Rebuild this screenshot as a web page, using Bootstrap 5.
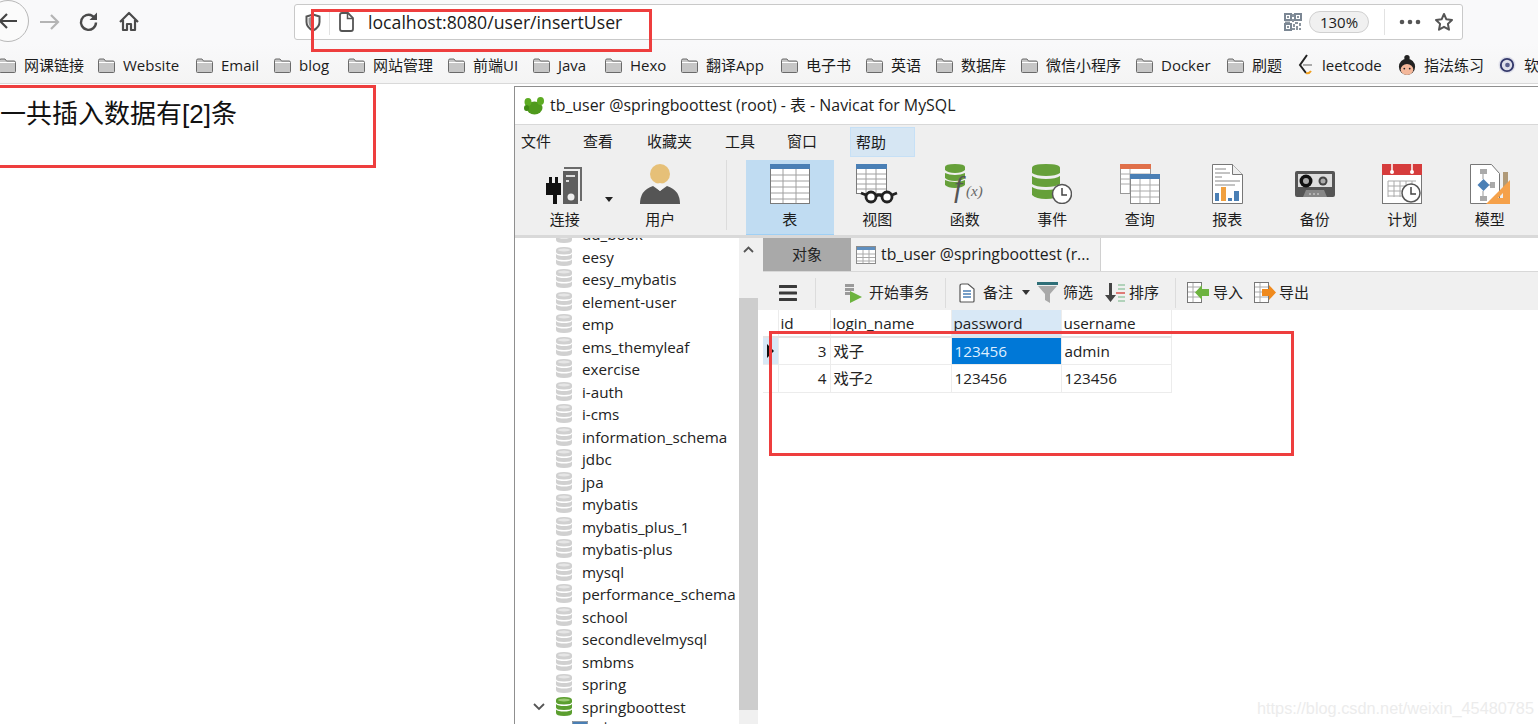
<!doctype html>
<html lang="en">
<head>
<meta charset="UTF-8" />
<title>insertUser</title>
<link href="https://cdn.jsdelivr.net/npm/bootstrap@5.3.0/dist/css/bootstrap.min.css" rel="stylesheet" />
<style>
html, body { height: 100%; overflow: hidden; background: #fff; }
body { font-family: "Open Sans", "Noto Sans CJK SC", sans-serif; color: #1c1c1c; position: relative; }
.ff-top { height: 44px; background: #f9f9fa; }
.ff-back { width: 42px; height: 42px; margin-left: -13px; border: 1px solid #b8b8b8; flex: none; background: #fbfbfb; }
.ff-btn { width: 40px; flex: none; }
.url-bar { width: 1169px; height: 36px; margin-left: 145px; margin-top: 4px; background: #fff; border: 1px solid #c9c9c9; border-radius: 3px; flex: none; }
.url-shield { margin-left: 10px; }
.url-text { font-size: 17.7px; color: #1b1b1b; margin-left: 14px; }
.zoom-pill { width: 60px; height: 22px; margin-left: 7px; border: 1px solid #d0d0d0; border-radius: 11px; background: #f0f0f0; font-size: 15px; line-height: 20px; text-align: center; }
.url-sep { width: 1px; height: 26px; background: #e2e2e2; }
.url-sep-end { margin-left: 15px; }
.url-dots { margin-left: 14px; }
.url-star { margin-left: 13px; margin-right: 8px; }
.bm-bar { height: 40px; padding-top: 3px; background: linear-gradient(#f9f9fa, #f4f4f4); border-bottom: 1px solid #d9d9d9; margin-left: -1px; white-space: nowrap; font-size: 15px; display: grid; align-items: center; grid-template-columns: 99px 98px 78px 74px 100px 85px 72px 76px 100px 85px 70px 85px 115px 91px 70px 101px 100px 60px; }
.bm-item { gap: 8px; }
.page-msg { font-family: "Liberation Sans", "Noto Sans CJK SC", sans-serif; font-size: 26px; line-height: 30px; color: #111; padding-top: 15px; }
.nv-win { position: absolute; left: 514px; top: 86px; width: 1030px; height: 640px; background: #fff; border: 1px solid #8f8f8f; border-right: 0; }
.nv-title { height: 38px; font-size: 15.9px; padding-left: 9px; gap: 5px; border-bottom: 1px solid #d8d8d8; }
.nv-menu { height: 35px; background: #efefef; font-size: 15px; padding-left: 6px; padding-bottom: 2px; }
.nv-menu span { flex: none; }
.nv-help { background: #d6e6f3; border: 1px solid #c6e0f6; height: 30px; line-height: 28px; padding-left: 5px; width: 65px; }
.mn-1 { width: 62px; } .mn-2 { width: 64px; } .mn-3 { width: 78px; } .mn-4 { width: 62px; } .mn-5 { width: 63px; }
.nv-tools { height: 78px; background: #efefef; border-bottom: 3px solid #d9d9d9; font-size: 15px; }
.nv-tool { width: 87.5px; height: 75px; flex: none; padding-top: 4px; text-align: center; line-height: 20px; }
.nv-tool svg { display: block; margin: 0 auto 5px; }
.nv-tool.active { background: #c0dcf2; border-bottom: 1px solid #9fd0f5; }
.tool-conn { margin-left: 6px; }
.tool-user { margin-left: 8px; }
.conn-caret { left: 84px; top: 37px; }
.nv-tool svg.conn-caret { margin: 0; }
.nv-vsep { width: 1px; height: 70px; background: #dcdcdc; margin: 0 19px 0 22px; flex: none; }
.nv-main { height: 486px; }
.nv-tree { width: 224px; flex: none; overflow: hidden; font-size: 15.2px; }
.nv-tree-list { margin-top: -15px; padding-left: 41px; }
.tree-row { height: 22.5px; line-height: 22.5px; gap: 10px; color: #222; position: relative; }
.tree-arrow { position: absolute; left: -23px; top: 7px; }
.nv-scroll { width: 19px; flex: none; background: #f0f0f0; position: relative; }
.scroll-up { left: 4px; top: 8px; }
.nv-thumb { position: absolute; top: 60px; left: 0; right: 0; height: 412px; background: #cdcdcd; }
.nv-right { width: 780px; flex: none; }
.tab-strip { height: 34px; padding-left: 5px; background: #fff; border-bottom: 1px solid #d8d8d8; font-size: 15.8px; }
.tab-obj { width: 88px; height: 33px; background: #a9a9a9; text-align: center; line-height: 32px; color: #222; flex: none; font-size: 15px; }
.tab-cur { width: 250px; height: 33px; background: #f1f1f1; gap: 5px; padding-left: 5px; flex: none; border-right: 1px solid #d0d0d0; white-space: nowrap; }
.tab-fill { background: #f0f0f0; width: 5px; height: 34px; margin-left: -5px; }
.sub-tools { height: 38px; background: #f0f0f0; font-size: 15px; padding-left: 21px; padding-top: 3px; }
.sub-sep { width: 1px; height: 30px; background: #dcdcdc; flex: none; }
.sub-item { flex: none; color: #222; }
.sep-1 { margin-left: 18px; }
.si-begin { margin-left: 27px; gap: 6px; }
.sep-2 { margin-left: 16px; }
.si-note { margin-left: 13px; gap: 8px; }
.note-caret { margin-left: 9px; }
.si-filter { margin-left: 7px; gap: 5px; }
.si-sort { margin-left: 11px; gap: 4px; }
.sep-3 { margin-left: 16px; }
.si-imp { margin-left: 11px; gap: 4px; }
.si-exp { margin-left: 11px; gap: 3px; }
.grid-tb { border-collapse: collapse; table-layout: fixed; font-size: 15.3px; width: 408px; margin-left: 5px; }
.grid-tb th, .grid-tb td { font-weight: 400; border: 1px solid #ececec; padding: 0 3px; white-space: nowrap; overflow: hidden; color: #222; }
.grid-tb th { height: 27px; text-align: left; background: #fff; border-top: 0; padding: 0 3px 0 2px; border-bottom: 2px solid #e4e4e4; }
.grid-tb td { height: 27.5px; }
.grid-tb .sel-col { background: #d8e8f6; }
.grid-tb .sel-cell { background: #0078d7; color: #dfefff; }
.grid-tb .ind-cell { padding: 0; border-left: 0; }
.grid-tb .ind-on { background: #d8e8f6; }
.grid-tb .num-cell { text-align: right; padding-right: 3px; }
.col-ind { width: 15px; } .col-id { width: 52px; } .col-login { width: 121px; } .col-wide { width: 110px; }
.red-box { position: absolute; border: 3px solid #ee3e3e; pointer-events: none; }
.rb-url { left: 311px; top: 9px; width: 341px; height: 43px; }
.rb-msg { left: -3px; top: 85px; width: 379px; height: 83px; }
.rb-grid { left: 769px; top: 331px; width: 525px; height: 125px; }
.wm { position: absolute; left: 1257px; top: 696px; font-family: "Liberation Sans", sans-serif; font-size: 16.3px; color: #ececec; white-space: nowrap; }
</style>
</head>
<body>
<svg width="0" height="0" class="position-absolute">
  <symbol id="i-folder" viewBox="0 0 17 15">
    <path d="M.5 2.500q0-1.500 1.500-1.500h4l1.500 2h7.500q1.500 0 1.500 1.500v9q0 1-1 1H1.500q-1 0-1-1z" fill="#c6c6c6" stroke="#6a6a6a"/>
    <path d="M1 4.500h15" stroke="#fff"/>
  </symbol>
  <symbol id="i-db" viewBox="0 0 16 20">
    <g fill="#d0d0d0">
      <path d="M0 3q0-3 8-3t8 3v2q0 2.500-8 2.500T0 5z"/>
      <path d="M0 7q2 2 8 2t8-2v3.500q0 2.500-8 2.500T0 10.500z"/>
      <path d="M0 12.500q2 2 8 2t8-2V16q0 3-8 3t-8-3z"/>
    </g>
    <ellipse cx="8" cy="3" rx="6" ry="1.500" fill="#e6e6e6"/>
  </symbol>
  <symbol id="i-db-g" viewBox="0 0 16 20">
    <g fill="#5b9e2f">
      <path d="M0 3q0-3 8-3t8 3v2q0 2.500-8 2.500T0 5z"/>
      <path d="M0 7q2 2 8 2t8-2v3.500q0 2.500-8 2.500T0 10.500z"/>
      <path d="M0 12.500q2 2 8 2t8-2V16q0 3-8 3t-8-3z"/>
    </g>
    <ellipse cx="8" cy="3" rx="6" ry="1.500" fill="#9ccb75"/>
  </symbol>
  <symbol id="i-grid" viewBox="0 0 20 20">
    <rect x=".5" y=".5" width="19" height="19" fill="#fff" stroke="#8c8c8c"/>
    <rect x="1" y="1" width="18" height="4" fill="#4a7fb5"/>
    <path d="M1 9h18M1 13h18M1 16.500h18M7 5v14M13 5v14" stroke="#a5a5a5" fill="none"/>
  </symbol>
</svg>

<!-- browser toolbar -->
<div class="ff-top d-flex align-items-start">
  <div class="ff-back rounded-circle d-flex align-items-center justify-content-center">
    <svg width="24" height="24" viewBox="0 0 24 24"><path d="M21 12H4M11 5l-7 7 7 7" fill="none" stroke="#444" stroke-width="2.200"/></svg>
  </div>
  <div class="d-flex align-items-center mt-2">
    <div class="ff-btn text-center"><svg width="24" height="24" viewBox="0 0 24 24"><path d="M3 12h18M14 5l7 7-7 7" fill="none" stroke="#b4b4b4" stroke-width="2.200"/></svg></div>
    <div class="ff-btn text-center"><svg width="22" height="24" viewBox="0 0 22 24"><path d="M18 12.500A7.500 7.500 0 1 1 14.500 6l3 2" fill="none" stroke="#4a4a4a" stroke-width="2.400"/><path d="M19 2.500V10h-7.500z" fill="#4a4a4a"/></svg></div>
    <div class="ff-btn text-center"><svg width="22" height="24" viewBox="0 0 22 24"><path d="M2 12 11 3l9 9M5 10v10h4v-6h4v6h4V10" fill="none" stroke="#4a4a4a" stroke-width="2.200" stroke-linejoin="round"/></svg></div>
  </div>
  <div class="url-bar d-flex align-items-center">
    <svg width="16" height="19" viewBox="0 0 16 19" class="url-shield"><path d="M8 1.500 14.500 3.500V9q0 5.500-6.500 8.500Q1.500 14.500 1.500 9V3.500z" fill="none" stroke="#555" stroke-width="2"/><path d="M8 3v13q-4.500-2.500-4.500-7V5z" fill="#999"/></svg>
    <div class="url-sep ms-2"></div>
    <svg width="16" height="20" viewBox="0 0 16 20" class="ms-2"><path d="M2 3q0-2 2-2h6l5 5v11q0 2-2 2H4q-2 0-2-2z" fill="#fff" stroke="#555" stroke-width="1.800"/><path d="M9.500 1v5.500H15" fill="none" stroke="#555" stroke-width="1.500"/></svg>
    <span class="url-text">localhost:8080/user/insertUser</span>
    <div class="flex-grow-1"></div>
    <svg width="18" height="18" viewBox="0 0 18 18"><path d="M1 1h6v6H1zM11 1h6v6h-6zM1 11h6v6H1z" fill="none" stroke="#7b8794" stroke-width="2"/><path d="M3 3h2v2H3zM13 3h2v2h-2zM3 13h2v2H3zM8 1h2v3H8zM8 6h2v3H8zM11 9h3v2h-3zM15 10h2v3h-2zM9 11h2v3H9zM12 13h2v4h-2zM8 15h3v2H8zM15 15h2v2h-2zM1 8.500h5v1.500H1z" fill="#8a949e"/></svg>
    <div class="zoom-pill">130%</div>
    <div class="url-sep url-sep-end"></div>
    <svg width="22" height="6" viewBox="0 0 22 6" class="url-dots"><circle cx="3" cy="3" r="2.300" fill="#555"/><circle cx="11" cy="3" r="2.300" fill="#555"/><circle cx="19" cy="3" r="2.300" fill="#555"/></svg>
    <svg width="20" height="20" viewBox="0 0 20 20" class="url-star"><path d="M10 2l2.400 5.300 5.600.7-4.100 3.900 1.100 5.800-5-2.900-5 2.900 1.100-5.800L2 8l5.600-.7z" fill="none" stroke="#555" stroke-width="2" stroke-linejoin="round"/></svg>
  </div>
</div>

<!-- bookmarks -->
<div class="bm-bar">
  <div class="bm-item d-flex align-items-center"><svg width="17" height="15"><use href="#i-folder"/></svg><span>网课链接</span></div>
  <div class="bm-item d-flex align-items-center"><svg width="17" height="15"><use href="#i-folder"/></svg><span>Website</span></div>
  <div class="bm-item d-flex align-items-center"><svg width="17" height="15"><use href="#i-folder"/></svg><span>Email</span></div>
  <div class="bm-item d-flex align-items-center"><svg width="17" height="15"><use href="#i-folder"/></svg><span>blog</span></div>
  <div class="bm-item d-flex align-items-center"><svg width="17" height="15"><use href="#i-folder"/></svg><span>网站管理</span></div>
  <div class="bm-item d-flex align-items-center"><svg width="17" height="15"><use href="#i-folder"/></svg><span>前端UI</span></div>
  <div class="bm-item d-flex align-items-center"><svg width="17" height="15"><use href="#i-folder"/></svg><span>Java</span></div>
  <div class="bm-item d-flex align-items-center"><svg width="17" height="15"><use href="#i-folder"/></svg><span>Hexo</span></div>
  <div class="bm-item d-flex align-items-center"><svg width="17" height="15"><use href="#i-folder"/></svg><span>翻译App</span></div>
  <div class="bm-item d-flex align-items-center"><svg width="17" height="15"><use href="#i-folder"/></svg><span>电子书</span></div>
  <div class="bm-item d-flex align-items-center"><svg width="17" height="15"><use href="#i-folder"/></svg><span>英语</span></div>
  <div class="bm-item d-flex align-items-center"><svg width="17" height="15"><use href="#i-folder"/></svg><span>数据库</span></div>
  <div class="bm-item d-flex align-items-center"><svg width="17" height="15"><use href="#i-folder"/></svg><span>微信小程序</span></div>
  <div class="bm-item d-flex align-items-center"><svg width="17" height="15"><use href="#i-folder"/></svg><span>Docker</span></div>
  <div class="bm-item d-flex align-items-center"><svg width="17" height="15"><use href="#i-folder"/></svg><span>刷题</span></div>
  <div class="bm-item d-flex align-items-center"><svg width="17" height="22" viewBox="0 0 17 22"><path d="M10 1 3 11l6 8" fill="none" stroke="#222" stroke-width="2"/><path d="M9 19q3 1 5-2" fill="none" stroke="#f0a020" stroke-width="2"/><path d="M6 11h9" fill="none" stroke="#aaa" stroke-width="2"/></svg><span>leetcode</span></div>
  <div class="bm-item d-flex align-items-center"><svg width="18" height="22" viewBox="0 0 20 24"><circle cx="10" cy="4" r="3" fill="#222"/><circle cx="10" cy="14" r="9" fill="#222"/><ellipse cx="10" cy="17" rx="7" ry="6" fill="#f3b79a"/><circle cx="7" cy="16" r="1" fill="#222"/><circle cx="13" cy="16" r="1" fill="#222"/></svg><span>指法练习</span></div>
  <div class="bm-item d-flex align-items-center"><svg width="18" height="20" viewBox="0 0 19 20"><circle cx="9.500" cy="10" r="9" fill="#dfe0ea"/><circle cx="9.500" cy="10" r="6.500" fill="none" stroke="#33386a" stroke-width="2"/><circle cx="10" cy="10" r="2.500" fill="#5a5f8c"/></svg><span>软</span></div>
</div>

<!-- page body -->
<div class="page-msg">一共插入数据有[2]条</div>

<!-- navicat window -->
<div class="nv-win">
  <div class="nv-title d-flex align-items-center">
    <svg width="21" height="18" viewBox="0 0 21 18"><ellipse cx="10.500" cy="11" rx="8" ry="6.500" fill="#4f9a1c"/><ellipse cx="4" cy="5" rx="3.500" ry="4" fill="#5cab22"/><ellipse cx="16.500" cy="4" rx="3.500" ry="4" fill="#5cab22"/><ellipse cx="2.500" cy="11" rx="2.500" ry="3" fill="#3f8a14"/></svg>
    <span>tb_user @springboottest (root) - 表 - Navicat for MySQL</span>
  </div>
  <div class="nv-menu d-flex align-items-center">
    <span class="mn-1">文件</span><span class="mn-2">查看</span><span class="mn-3">收藏夹</span><span class="mn-4">工具</span><span class="mn-5">窗口</span><span class="nv-help">帮助</span>
  </div>
  <div class="nv-tools d-flex">
    <div class="nv-tool position-relative tool-conn">
      <svg width="40" height="40" viewBox="0 0 40 40"><path d="M19 5V3h18v34h-2V5z" fill="#6a6a6a"/><path d="M18 7h15v33H18z" fill="#5e5e5e"/><path d="M21 11h9v2h-9zM21 16h3v2h-3z" fill="#ddd"/><circle cx="26" cy="33" r="3.500" fill="#eee"/><path d="M4 13h3v6h3v-6h3v6h3v12H12v9H8v-9H1V19h3z" fill="#111"/></svg>
      连接
      <svg class="position-absolute conn-caret" width="8" height="5" viewBox="0 0 8 5"><path d="M0 0h8L4 5z" fill="#222"/></svg>
    </div>
    <div class="nv-tool tool-user">
      <svg width="40" height="40" viewBox="0 0 40 40"><circle cx="20" cy="10" r="10" fill="#e6c078"/><path d="M0 40q0-14 13-18l7 5 7-5q13 4 13 18z" fill="#555"/><path d="M14 21l6 6 6-6-6-2z" fill="#f4f4f4"/></svg>
      用户
    </div>
    <div class="nv-vsep"></div>
    <div class="nv-tool active">
      <svg width="40" height="40" viewBox="0 0 40 40"><rect x=".5" y=".5" width="39" height="39" fill="#fff" stroke="#7a7a7a"/><rect x="0" y="0" width="40" height="5" fill="#4a7fb5"/><path d="M1 11h38M1 17h38M1 23h38M1 29h38M1 35h38M13 5v34M26 5v34" stroke="#a0a0a0" fill="none"/></svg>
      表
    </div>
    <div class="nv-tool">
      <svg width="42" height="40" viewBox="0 0 42 40"><rect x=".5" y=".5" width="30" height="29" fill="#fff" stroke="#7a7a7a"/><rect width="31" height="5" fill="#4a7fb5"/><path d="M1 10h29M1 15h29M1 20h29M1 25h29M10 5v24M20 5v24" stroke="#a0a0a0" fill="none"/><g fill="#fff" stroke="#222" stroke-width="2.800"><circle cx="15" cy="33" r="5"/><circle cx="31" cy="33" r="5"/><path d="M20 32q3-2 6 0M10 31l-5-2M36 31l5-2" fill="none"/></g></svg>
      视图
    </div>
    <div class="nv-tool">
      <svg width="40" height="40" viewBox="0 0 40 40"><g fill="#66a03a"><path d="M0 3q0-3 10-3t10 3v3q-3 3-10 3T0 6z"/><path d="M0 9q4 2 10 2t10-2v5q-3 3-10 3t-10-3z"/><path d="M0 16q4 2 10 2t10-2v5q-3 3-10 3t-10-3z"/></g><text x="9" y="33" font-family="Liberation Serif,serif" font-style="italic" font-size="30" fill="#555">f</text><text x="21" y="32" font-family="Liberation Serif,serif" font-style="italic" font-size="15" fill="#666">(x)</text></svg>
      函数
    </div>
    <div class="nv-tool">
      <svg width="40" height="40" viewBox="0 0 40 40"><g fill="#66a03a"><path d="M0 4q0-4 14-4t14 4v5q-4 3-14 3T0 9z"/><path d="M0 12q4 3 14 3t14-3v8q-4 3-14 3T0 20z"/><path d="M0 23q4 3 14 3t14-3v8q-4 4-14 4T0 31z"/></g><circle cx="30" cy="30" r="9.500" fill="#fff" stroke="#555" stroke-width="1.500"/><path d="M30 24v7h5" fill="none" stroke="#444" stroke-width="1.500"/></svg>
      事件
    </div>
    <div class="nv-tool">
      <svg width="40" height="40" viewBox="0 0 40 40"><rect x=".5" y=".5" width="30" height="29" fill="#fff" stroke="#999"/><rect width="31" height="5" fill="#e0704a"/><path d="M1 10h29M1 15h29M1 20h29M10 5v24" stroke="#aaa" fill="none"/><rect x="10.500" y="10.500" width="29" height="29" fill="#fff" stroke="#888"/><rect x="10" y="10" width="30" height="5" fill="#4a7fb5"/><path d="M11 21h28M11 27h28M11 33h28M20 15v24M30 15v24" stroke="#aaa" fill="none"/></svg>
      查询
    </div>
    <div class="nv-tool">
      <svg width="31" height="40" viewBox="0 0 31 40"><path d="M.5.500h20l10 10v29H.5z" fill="#fff" stroke="#777"/><path d="M20.500.500v10h10" fill="#eee" stroke="#777"/><path d="M3 5h11M3 9h15M3 13h7M3 17h25M3 21h20" stroke="#888" fill="none"/><path d="M3 29h4v8H3z" fill="#4a7fb5"/><path d="M9 23h5v14H9z" fill="#f0a040"/><path d="M16 34h4v3h-4z" fill="#4a7fb5"/><path d="M22 27h5v10h-5z" fill="#4a7fb5"/></svg>
      报表
    </div>
    <div class="nv-tool">
      <svg width="40" height="40" viewBox="0 0 40 40"><rect y="7" width="40" height="26" rx="2" fill="#555"/><rect x="3" y="10" width="34" height="13" fill="#ddd"/><circle cx="11" cy="17" r="6.500" fill="#111"/><circle cx="11" cy="17" r="3" fill="#aaa"/><circle cx="28" cy="17" r="4.500" fill="#444"/><circle cx="28" cy="17" r="2.500" fill="#aaa"/><path d="M8 33l3-7h18l3 7z" fill="#888"/><path d="M14 30h12" stroke="#ddd" stroke-dasharray="2 2"/></svg>
      备份
    </div>
    <div class="nv-tool">
      <svg width="40" height="40" viewBox="0 0 40 40"><rect x=".5" y=".5" width="39" height="39" fill="#fff" stroke="#777"/><rect width="40" height="11" fill="#d63c3c"/><circle cx="10" cy="8" r="2" fill="#fff"/><circle cx="30" cy="8" r="2" fill="#fff"/><path d="M10 0v7M30 0v7" stroke="#fff" stroke-width="1.500"/><path d="M6 17h28M6 22h28M6 27h28M6 32h20M6 17v16M12 17v16M18 17v16M24 17v16M30 17v12" stroke="#aaa" fill="none"/><circle cx="29" cy="29" r="9" fill="#fff" stroke="#555" stroke-width="1.500"/><path d="M29 23v7h5" fill="none" stroke="#444" stroke-width="1.500"/></svg>
      计划
    </div>
    <div class="nv-tool">
      <svg width="40" height="40" viewBox="0 0 40 40"><path d="M.5.500h21l8 9v30H.5z" fill="#fff" stroke="#777"/><path d="M33 8h5v20h-5z" fill="#b09a78"/><path d="M10 5h7v5h-7zM20 18h5v6h-5zM10 32h7v5h-7z" fill="#aaa"/><path d="M13.500 15l6 6-6 6-6-6z" fill="#4a7fb5"/><path d="M13 10v5M13 27v5M19 21h2" stroke="#999"/><path d="M40 16v24H16zM33 29v5h-5z" fill="#f5a14a" fill-rule="evenodd"/></svg>
      模型
    </div>
  </div>
  <div class="nv-main d-flex">
    <div class="nv-tree">
      <div class="nv-tree-list">
        <div class="tree-row d-flex align-items-center"><svg width="16" height="20"><use href="#i-db"/></svg><span>dd_book</span></div>
        <div class="tree-row d-flex align-items-center"><svg width="16" height="20"><use href="#i-db"/></svg><span>eesy</span></div>
        <div class="tree-row d-flex align-items-center"><svg width="16" height="20"><use href="#i-db"/></svg><span>eesy_mybatis</span></div>
        <div class="tree-row d-flex align-items-center"><svg width="16" height="20"><use href="#i-db"/></svg><span>element-user</span></div>
        <div class="tree-row d-flex align-items-center"><svg width="16" height="20"><use href="#i-db"/></svg><span>emp</span></div>
        <div class="tree-row d-flex align-items-center"><svg width="16" height="20"><use href="#i-db"/></svg><span>ems_themyleaf</span></div>
        <div class="tree-row d-flex align-items-center"><svg width="16" height="20"><use href="#i-db"/></svg><span>exercise</span></div>
        <div class="tree-row d-flex align-items-center"><svg width="16" height="20"><use href="#i-db"/></svg><span>i-auth</span></div>
        <div class="tree-row d-flex align-items-center"><svg width="16" height="20"><use href="#i-db"/></svg><span>i-cms</span></div>
        <div class="tree-row d-flex align-items-center"><svg width="16" height="20"><use href="#i-db"/></svg><span>information_schema</span></div>
        <div class="tree-row d-flex align-items-center"><svg width="16" height="20"><use href="#i-db"/></svg><span>jdbc</span></div>
        <div class="tree-row d-flex align-items-center"><svg width="16" height="20"><use href="#i-db"/></svg><span>jpa</span></div>
        <div class="tree-row d-flex align-items-center"><svg width="16" height="20"><use href="#i-db"/></svg><span>mybatis</span></div>
        <div class="tree-row d-flex align-items-center"><svg width="16" height="20"><use href="#i-db"/></svg><span>mybatis_plus_1</span></div>
        <div class="tree-row d-flex align-items-center"><svg width="16" height="20"><use href="#i-db"/></svg><span>mybatis-plus</span></div>
        <div class="tree-row d-flex align-items-center"><svg width="16" height="20"><use href="#i-db"/></svg><span>mysql</span></div>
        <div class="tree-row d-flex align-items-center"><svg width="16" height="20"><use href="#i-db"/></svg><span>performance_schema</span></div>
        <div class="tree-row d-flex align-items-center"><svg width="16" height="20"><use href="#i-db"/></svg><span>school</span></div>
        <div class="tree-row d-flex align-items-center"><svg width="16" height="20"><use href="#i-db"/></svg><span>secondlevelmysql</span></div>
        <div class="tree-row d-flex align-items-center"><svg width="16" height="20"><use href="#i-db"/></svg><span>smbms</span></div>
        <div class="tree-row d-flex align-items-center"><svg width="16" height="20"><use href="#i-db"/></svg><span>spring</span></div>
        <div class="tree-row d-flex align-items-center"><svg class="tree-arrow" width="12" height="8" viewBox="0 0 12 8"><path d="M1 1l5 5 5-5" fill="none" stroke="#555" stroke-width="1.800"/></svg><svg width="16" height="20"><use href="#i-db-g"/></svg><span>springboottest</span></div>
        <div class="tree-row d-flex align-items-center ps-3"><svg width="16" height="20"><use href="#i-grid"/></svg><span>表</span></div>
      </div>
    </div>
    <div class="nv-scroll">
      <svg class="position-absolute scroll-up" width="11" height="7" viewBox="0 0 11 7"><path d="M1 6l4.500-4.500L10 6" fill="none" stroke="#555" stroke-width="1.800"/></svg>
      <div class="nv-thumb"></div>
    </div>
    <div class="nv-right">
      <div class="tab-strip d-flex">
        <div class="tab-fill"></div>
        <div class="tab-obj">对象</div>
        <div class="tab-cur d-flex align-items-center">
          <svg width="20" height="18" viewBox="0 0 20 18"><rect x=".5" y=".5" width="19" height="17" fill="#fff" stroke="#8c8c8c"/><rect x="1" y="1" width="18" height="3" fill="#5f8fbf"/><path d="M1 8h18M1 11.500h18M1 15h18M7 4v13M13 4v13" stroke="#aaa" fill="none"/></svg>
          <span>tb_user @springboottest (r...</span>
        </div>
      </div>
      <div class="sub-tools d-flex align-items-center">
        <svg width="18" height="16" viewBox="0 0 18 16"><path d="M1 1.500h16M1 8h16M1 14.500h16" stroke="#3a3a3a" stroke-width="3" stroke-linecap="round"/></svg>
        <div class="sub-sep sep-1"></div>
        <div class="sub-item si-begin d-flex align-items-center"><svg width="20" height="20" viewBox="0 0 20 20"><path d="M2 1h9v3H2zM2 5h9v3H2zM2 9h6v3H2z" fill="#9a9a9a"/><path d="M7 8l12 6-12 6z" fill="#6db33f"/></svg><span>开始事务</span></div>
        <div class="sub-sep sep-2"></div>
        <div class="sub-item si-note d-flex align-items-center"><svg width="16" height="20" viewBox="0 0 16 20"><path d="M1 3q0-2 2-2h6l6 5v12q0 1-1 1H2q-1 0-1-1z" fill="#fff" stroke="#555" stroke-width="1.200"/><path d="M4 8h8M4 11h8M4 14h8" stroke="#4a7fb5" stroke-width="1.500"/></svg><span>备注</span></div>
        <svg width="8" height="5" viewBox="0 0 8 5" class="note-caret"><path d="M0 0h8L4 5z" fill="#333"/></svg>
        <div class="sub-item si-filter d-flex align-items-center"><svg width="21" height="21" viewBox="0 0 21 21"><path d="M0 0h21v3H0z" fill="#2f6f78"/><path d="M1 4h19l-7 8v9l-5-3v-6z" fill="#a9a9a9"/></svg><span>筛选</span></div>
        <div class="sub-item si-sort d-flex align-items-center"><svg width="21" height="21" viewBox="0 0 21 21"><path d="M5 1h3v12h4l-5.500 7L1 13h4z" fill="#444"/><path d="M14 3h7M14 7h7M14 15h7M14 19h7" stroke="#9cc7a8" stroke-width="1.500"/><path d="M12 11h9" stroke="#d9534f" stroke-width="1.500"/></svg><span>排序</span></div>
        <div class="sub-sep sep-3"></div>
        <div class="sub-item si-imp d-flex align-items-center"><svg width="22" height="21" viewBox="0 0 22 21"><rect x=".5" y=".5" width="14" height="20" fill="#fff" stroke="#777"/><path d="M1 5h13M1 10h13M1 15h13M6 1v19" stroke="#aaa"/><path d="M22 7h-7V3L8 10.500 15 18v-4h7z" fill="#6db33f"/></svg><span>导入</span></div>
        <div class="sub-item si-exp d-flex align-items-center"><svg width="22" height="21" viewBox="0 0 22 21"><rect x=".5" y=".5" width="14" height="20" fill="#fff" stroke="#777"/><path d="M1 5h13M1 10h13M1 15h13M6 1v19" stroke="#aaa"/><path d="M8 7h7V3l7 7.500L15 18v-4H8z" fill="#f08a1d"/></svg><span>导出</span></div>
      </div>
      <table class="grid-tb">
        <colgroup><col class="col-ind"><col class="col-id"><col class="col-login"><col class="col-wide"><col class="col-wide"></colgroup>
        <thead>
          <tr><th class="ind-cell"></th><th>id</th><th>login_name</th><th class="sel-col">password</th><th>username</th></tr>
        </thead>
        <tbody>
          <tr><td class="ind-cell ind-on"><svg width="8" height="14" viewBox="0 0 8 14" class="d-block ms-1"><path d="M0 0l7 7-7 7z" fill="#111"/></svg></td><td class="num-cell">3</td><td>戏子</td><td class="sel-cell">123456</td><td>admin</td></tr>
          <tr><td class="ind-cell"></td><td class="num-cell">4</td><td>戏子2</td><td>123456</td><td>123456</td></tr>
        </tbody>
      </table>
    </div>
  </div>
</div>

<!-- red annotation boxes drawn over the screenshot -->
<div class="red-box rb-url"></div>
<div class="red-box rb-msg"></div>
<div class="red-box rb-grid"></div>
<div class="wm">https://blog.csdn.net/weixin_45480785</div>

<script src="https://cdn.jsdelivr.net/npm/bootstrap@5.3.0/dist/js/bootstrap.bundle.min.js"></script>
</body>
</html>
